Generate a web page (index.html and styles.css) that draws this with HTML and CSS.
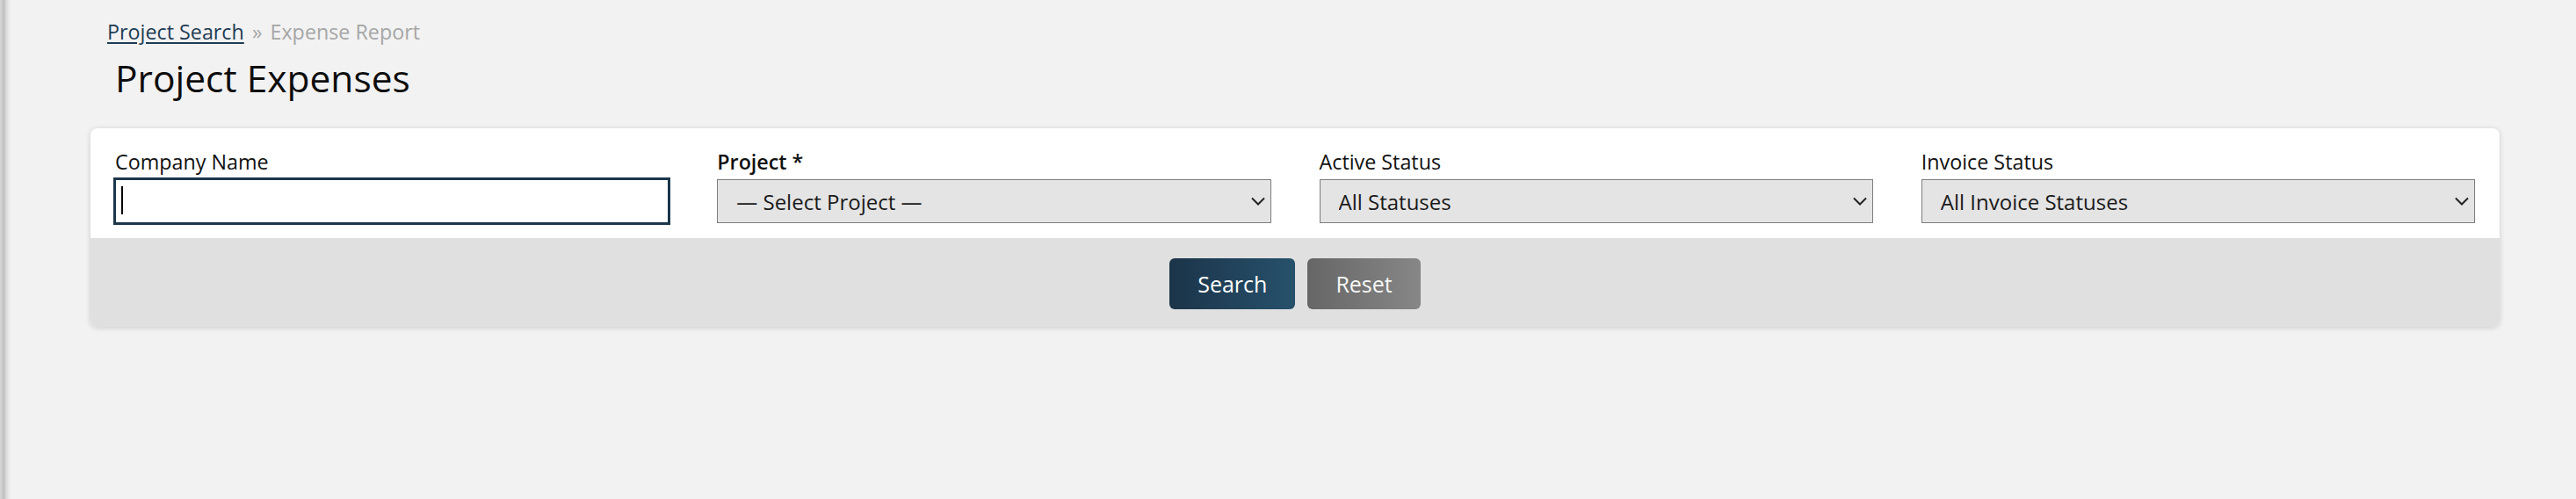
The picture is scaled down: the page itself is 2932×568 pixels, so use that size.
FILE: index.html
```html
<!DOCTYPE html>
<html lang="en">
<head>
<meta charset="utf-8">
<title>Project Expenses</title>
<link rel="stylesheet" href="styles.css">
</head>
<body>
<div class="page">
  <nav class="breadcrumb">
    <a href="#" class="crumb-link">Project Search</a>
    <span class="crumb-sep">»</span>
    <span class="crumb-current">Expense Report</span>
  </nav>
  <h1 class="title">Project Expenses</h1>

  <form class="card">
    <div class="fields">
      <div class="field">
        <label class="label" for="company">Company Name</label>
        <div class="control">
          <input id="company" class="input is-focused" type="text">
          <span class="caret"></span>
        </div>
      </div>
      <div class="field">
        <label class="label label-strong" for="project">Project *</label>
        <div class="control">
          <select id="project" class="select">
            <option>— Select Project —</option>
          </select>
          <svg class="chevron" width="16" height="10" viewBox="0 0 16 10"><path d="M1 1.5 L8 8.5 L15 1.5" fill="none" stroke="#222" stroke-width="2"/></svg>
        </div>
      </div>
      <div class="field">
        <label class="label" for="active">Active Status</label>
        <div class="control">
          <select id="active" class="select">
            <option>All Statuses</option>
          </select>
          <svg class="chevron" width="16" height="10" viewBox="0 0 16 10"><path d="M1 1.5 L8 8.5 L15 1.5" fill="none" stroke="#222" stroke-width="2"/></svg>
        </div>
      </div>
      <div class="field">
        <label class="label" for="invoice">Invoice Status</label>
        <div class="control">
          <select id="invoice" class="select">
            <option>All Invoice Statuses</option>
          </select>
          <svg class="chevron" width="16" height="10" viewBox="0 0 16 10"><path d="M1 1.5 L8 8.5 L15 1.5" fill="none" stroke="#222" stroke-width="2"/></svg>
        </div>
      </div>
    </div>
    <div class="actions">
      <button type="button" class="btn btn-primary">Search</button>
      <button type="button" class="btn btn-secondary">Reset</button>
    </div>
  </form>
</div>
</body>
</html>
```
FILE: styles.css
```css
html, body {
  margin: 0;
  padding: 0;
}

body {
  min-height: 568px;
  background: linear-gradient(90deg, #d6d6d6 0px, #d0d0d0 2px, #bdbdbd 4px, #dadada 7px, #f2f2f2 12px);
  font-family: "Open Sans", "Noto Sans", sans-serif;
  color: #111;
}

.page {
  padding: 19px 87px 0 103px;
}

.breadcrumb {
  padding-left: 19px;
  font-size: 23.3px;
  line-height: 34px;
  color: #a6a6a6;
}

.crumb-link {
  color: #1f3d55;
  text-decoration: underline;
  text-underline-offset: 3px;
}

.crumb-sep {
  margin: 0 3px;
}

.title {
  margin: 11px 0 32px;
  padding-left: 28px;
  font-size: 42.5px;
  font-weight: 400;
  line-height: 50px;
  color: #0d0d0d;
}

.card {
  background: #fff;
  border-radius: 8px;
  box-shadow: 0 1px 6px rgba(0, 0, 0, 0.16);
  overflow: hidden;
}

.fields {
  display: grid;
  grid-template-columns: repeat(4, 1fr);
  column-gap: 55px;
  padding: 22px 28px 17px;
}

.field {
  display: flex;
  flex-direction: column;
}

.label {
  display: block;
  font-size: 23.3px;
  line-height: 33px;
  margin-bottom: 3px;
  color: #111;
}

.label-strong {
  font-weight: 600;
}

.control {
  position: relative;
}

.input,
.select {
  display: block;
  width: 100%;
  height: 50px;
  box-sizing: border-box;
  margin: 0;
  font-family: "Open Sans", "Noto Sans", sans-serif;
  font-size: 24px;
  color: #1a1a1a;
  border-radius: 0;
}

.input {
  background: #fff;
  border: 1px solid #1c364b;
  padding: 0 8px;
}

.input.is-focused {
  outline: 2px solid #1c364b;
  outline-offset: 0;
}

.caret {
  position: absolute;
  left: 7px;
  top: 8px;
  width: 2px;
  height: 32px;
  background: #000;
}

.select {
  -webkit-appearance: none;
  appearance: none;
  background: #e4e4e4;
  border: 1px solid #7d7d7d;
  padding: 0 40px 0 21px;
}

.chevron {
  position: absolute;
  right: 7px;
  top: 20px;
  pointer-events: none;
}

.actions {
  display: flex;
  justify-content: center;
  gap: 14px;
  background: #e0e0e0;
  padding: 23px 0 20px;
}

.btn {
  border: none;
  border-radius: 6px;
  font-family: "Open Sans", "Noto Sans", sans-serif;
  font-size: 25px;
  line-height: 34px;
  padding: 12px 32px;
  color: #fff;
  cursor: pointer;
}

.btn-primary {
  background: linear-gradient(90deg, #1b3449 0%, #27516c 100%);
}

.btn-secondary {
  background: linear-gradient(90deg, #666666 0%, #878787 100%);
  color: #f7f7f7;
}
```
